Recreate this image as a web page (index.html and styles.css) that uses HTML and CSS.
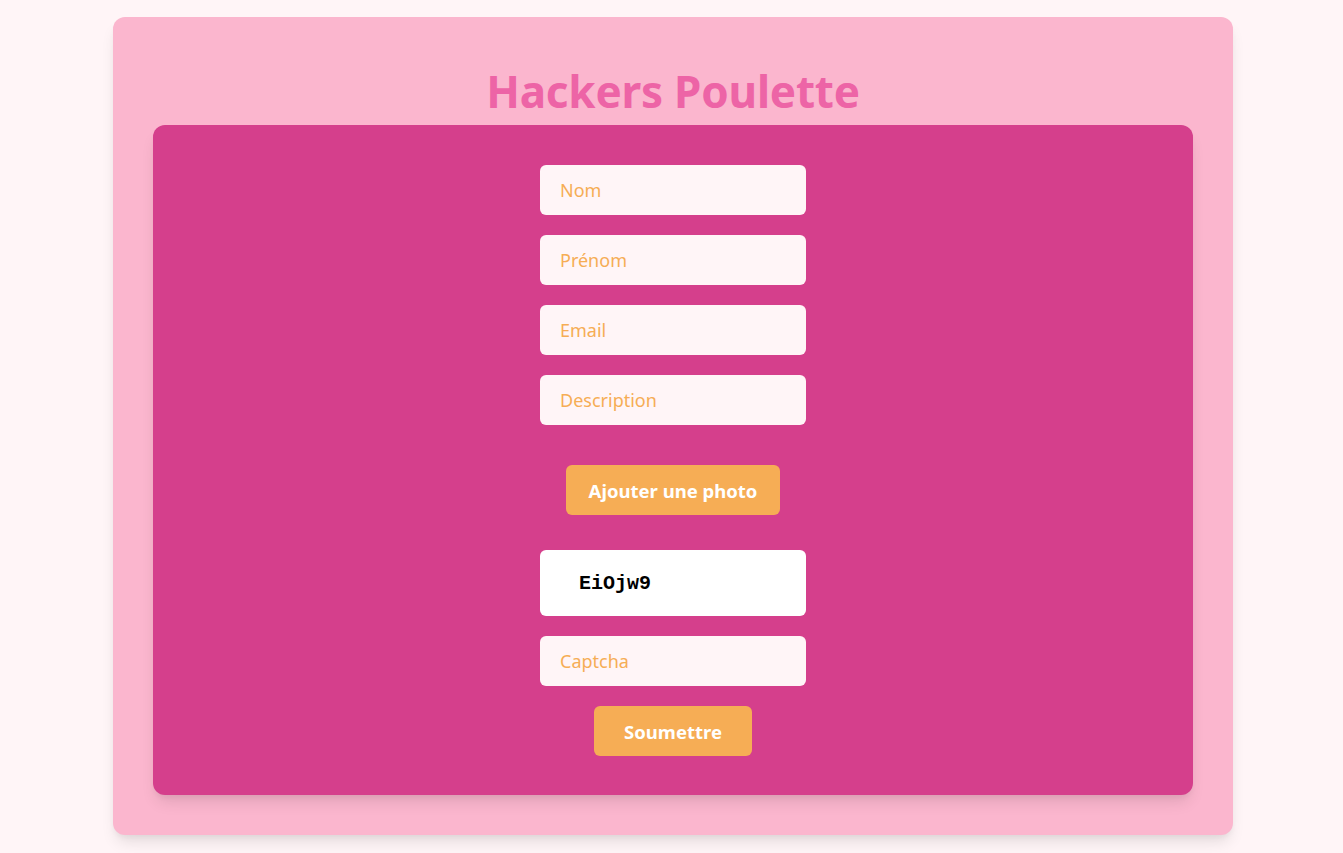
FILE: index.html
```html
<!DOCTYPE html>
<html lang="fr">
<head>
<meta charset="utf-8">
<title>Hackers Poulette</title>
<link rel="stylesheet" href="styles.css">
</head>
<body>
<main class="outer">
  <h1 class="title">Hackers Poulette</h1>
  <section class="inner">
    <form class="form">
      <input class="field" type="text" placeholder="Nom">
      <input class="field" type="text" placeholder="Prénom">
      <input class="field" type="email" placeholder="Email">
      <input class="field" type="text" placeholder="Description">
      <button class="btn btn-photo" type="button">Ajouter une photo</button>
      <div class="captcha"><span class="captcha-code">EiOjw9</span></div>
      <input class="field" type="text" placeholder="Captcha">
      <button class="btn btn-submit" type="submit">Soumettre</button>
    </form>
  </section>
</main>
</body>
</html>
```

FILE: styles.css
```css
* { box-sizing: border-box; }
html, body { margin: 0; }
body {
  background: #fff5f7;
  font-family: "Noto Sans", "Open Sans", sans-serif;
  padding: 17px 0 0 3px;
  min-height: 853px;
}
.outer {
  width: 1120px;
  margin: 0 auto;
  background: #fbb6ce;
  border-radius: 12px;
  padding: 40px 40px 40px;
  box-shadow: 0 10px 15px -3px rgba(0,0,0,0.1), 0 4px 6px -2px rgba(0,0,0,0.05);
}
.title {
  margin: 0;
  text-align: center;
  color: #ed64a6;
  font-size: 44px;
  font-weight: 700;
  line-height: 68px;
  letter-spacing: -0.2px;
}
.inner {
  background: #d53f8c;
  border-radius: 12px;
  padding: 40px 0 39px;
  box-shadow: 0 10px 15px -3px rgba(0,0,0,0.1), 0 4px 6px -2px rgba(0,0,0,0.05);
}
.form {
  display: flex;
  flex-direction: column;
  align-items: center;
  gap: 20px;
}
.field {
  width: 266px;
  height: 50px;
  border: none;
  border-radius: 6px;
  background: #fff5f7;
  padding: 0 20px;
  font-family: inherit;
  font-size: 18px;
  color: #333;
  outline: none;
}
.field::placeholder { color: #f6ad55; opacity: 1; }
.btn {
  height: 50px;
  border: none;
  border-radius: 6px;
  background: #f6ad55;
  color: #fff;
  font-family: inherit;
  font-size: 18px;
  font-weight: 700;
  cursor: pointer;
}
.btn-photo { width: 214px; margin-top: 20px; font-size: 18.5px; }
.btn-submit { width: 158px; font-size: 18.5px; }
.captcha {
  width: 266px;
  height: 66px;
  margin-top: 15px;
  background: #fff;
  border-radius: 6px;
  display: flex;
  align-items: center;
  padding-left: 39px;
}
.captcha-code {
  font-family: "Liberation Mono", "DejaVu Sans Mono", monospace;
  font-weight: 700;
  font-size: 20px;
  color: #000;
}
```
